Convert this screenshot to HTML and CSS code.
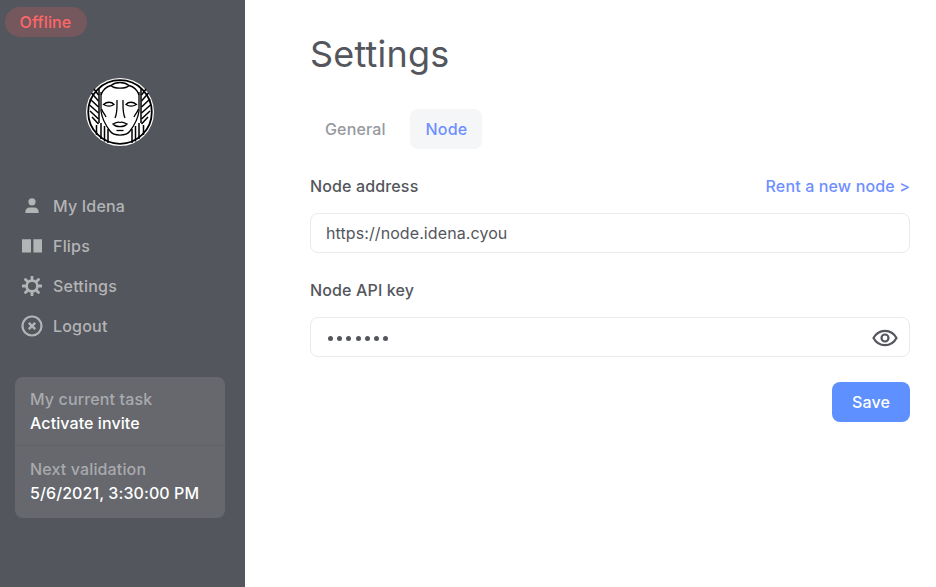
FILE: index.html
```html
<!DOCTYPE html>
<html lang="en">
<head>
<meta charset="utf-8">
<title>Settings</title>
<link rel="stylesheet" href="styles.css">
</head>
<body>
<div class="app">
  <aside class="sidebar">
    <div class="status">Offline</div>
    <div class="logo-row">
      <svg class="logo" viewBox="0 0 68 68" width="68" height="68">
        <circle cx="34" cy="34" r="34" fill="#fff"/>
        <circle cx="34" cy="34" r="31.800" fill="#fff" stroke="#000" stroke-width="1.800"/>
        <g fill="none" stroke="#000" stroke-width="1.300">
          <path d="M25 7.500 C28 11 40 11 43 7.500"/>
          <path d="M25 7.500 C30 3.500 38 3.500 43 7.500"/>
          <path d="M15 17 C17 11 21 8.500 25 7.500 M53 17 C51 11 47 8.500 43 7.500"/>
          <path d="M15 14 V33 C16 41 21 49 24 53 C28 58.500 40 58.500 44 53 C47 49 52 41 53 33 V14"/>
          <path d="M15.500 31 C17 35 19 36 20 39 M52.500 31 C51 35 49 36 48 39"/>
          <path d="M31 22 C31 28 31.500 35 29 40 M37 22 C37 28 36.500 35 39 40"/>
          <path d="M17.500 26.500 C21 23.500 25.500 23.500 28 26.500 C25 28.500 21 28.500 17.500 26.500 Z"/>
          <path d="M50.500 26.500 C47 23.500 42.500 23.500 40 26.500 C43 28.500 47 28.500 50.500 26.500 Z"/>
          <path d="M27 46 C30 44.500 32 43.500 34 44.500 C36 43.500 38 44.500 41 46 C38 49.500 30 49.500 27 46 Z"/>
          <path d="M30.500 52.500 H37.500"/>
          <path d="M13 11 V45 M55 11 V45" stroke-width="1.500"/>
          <path d="M12.500 17 L8 11 M12.500 23 L5.500 15 M12.500 29 L4 21 M12.500 35 L3.500 27 M12.500 41 L4 33 M12.500 46 L6 39" stroke-width="1.500"/>
          <path d="M55.500 17 L60 11 M55.500 23 L62.500 15 M55.500 29 L64 21 M55.500 35 L64.500 27 M55.500 41 L64 33 M55.500 46 L62 39" stroke-width="1.500"/>
          <path d="M15 45 V61 M18.500 48 V63.500 M22 51 V65 M53 45 V61 M49.500 48 V63.500 M46 51 V65" stroke-width="1.500"/>
          <path d="M10.500 47 V57 M57.500 47 V57" stroke-width="1.500"/>
        </g>
      </svg>
    </div>
    <nav class="nav">
      <a class="nav-item">
        <svg class="nav-icon" viewBox="0 0 20 20"><circle cx="10" cy="5.800" r="3.600" fill="currentColor"/><path d="M3.400 17v-1.600c0-2.300 1.900-4 4.200-4h4.800c2.300 0 4.200 1.700 4.200 4V17z" fill="currentColor"/></svg>
        <span>My Idena</span>
      </a>
      <a class="nav-item">
        <svg class="nav-icon" viewBox="0 0 20 20"><path d="M0 3.200h9v13.400H0zM11.400 3.200H20v13.400h-8.600z" fill="currentColor"/></svg>
        <span>Flips</span>
      </a>
      <a class="nav-item">
        <svg class="nav-icon" viewBox="0 0 20 20"><circle cx="10" cy="10" r="5.400" fill="none" stroke="currentColor" stroke-width="2.600"/><path d="M10 0.800v3M10 16.200v3M0.800 10h3M16.200 10h3M3.500 3.500l2.100 2.100M14.400 14.400l2.100 2.100M3.500 16.500l2.100-2.100M14.400 5.600l2.100-2.100" stroke="currentColor" stroke-width="2.800" fill="none" stroke-linecap="round"/></svg>
        <span>Settings</span>
      </a>
      <a class="nav-item">
        <svg class="nav-icon nav-icon-lg" viewBox="0 0 22 22"><circle cx="11" cy="11" r="9.500" fill="none" stroke="currentColor" stroke-width="2.200"/><path d="M7.800 7.800l6.400 6.400M14.200 7.800l-6.400 6.400" stroke="currentColor" stroke-width="2.400" fill="none"/></svg>
        <span>Logout</span>
      </a>
    </nav>
    <section class="card">
      <div class="card-block">
        <div class="card-label">My current task</div>
        <div class="card-value">Activate invite</div>
      </div>
      <div class="card-block card-block-last">
        <div class="card-label">Next validation</div>
        <div class="card-value">5/6/2021, 3:30:00 PM</div>
      </div>
    </section>
  </aside>
  <main class="main">
    <h1 class="title">Settings</h1>
    <div class="tabs">
      <a class="tab">General</a>
      <a class="tab tab-active">Node</a>
    </div>
    <div class="field-head">
      <label class="label">Node address</label>
      <a class="link">Rent a new node &gt;</a>
    </div>
    <div class="input"><span>https://node.idena.cyou</span></div>
    <label class="label label-key">Node API key</label>
    <div class="input input-pass">
      <span class="dots"><i></i><i></i><i></i><i></i><i></i><i></i><i></i></span>
      <svg class="eye" viewBox="0 0 26 20" width="26" height="20"><path d="M1.500 10C4 5.300 8 2.800 13 2.800S22 5.300 24.500 10C22 14.700 18 17.200 13 17.200S4 14.700 1.500 10z" fill="none" stroke="#53565c" stroke-width="2.200"/><circle cx="13" cy="10" r="3.500" fill="none" stroke="#53565c" stroke-width="2.200"/></svg>
    </div>
    <div class="actions"><button class="save">Save</button></div>
  </main>
</div>
</body>
</html>
```
FILE: styles.css
```css
* { box-sizing: border-box; }
html, body { margin: 0; height: 100%; }
body { font-family: Inter, "Liberation Sans", sans-serif; background: #fff; color: #53565c; overflow: hidden; letter-spacing: .14px; }
.app { display: flex; height: 587px; }
.sidebar { width: 245px; flex: none; background: #53565c; padding: 7px 20px 0 5px; }
.status { width: 82px; height: 30px; border-radius: 15px; background: rgba(255,102,102,.2); color: #ff6666; font-size: 16px; font-weight: 500; line-height: 30px; text-align: center; padding-right: 1px; }
.logo-row { margin: 41px 0 0 81px; }
.logo { display: block; }
.nav { margin: 40px 0 0 17px; }
.nav-item { display: flex; align-items: center; height: 40px; color: #b3b4b6; font-size: 16px; font-weight: 500; letter-spacing: .2px; }
.nav-icon { width: 20px; height: 20px; margin-right: 11px; flex: none; }
.nav-icon-lg { width: 22px; height: 22px; margin-left: -1px; margin-right: 10px; }
.card { margin: 31px 0 0 10px; width: 210px; border-radius: 8px; background: #66686d; }
.card-block { padding: 10px 15px 10px; height: 69px; border-bottom: 1px solid #606267; }
.card-block-last { border-bottom: 0; height: 72px; padding-top: 11px; }
.card-label { color: #a9aaad; font-size: 16px; font-weight: 500; line-height: 24px; }
.card-value { color: #fff; font-size: 16px; font-weight: 500; line-height: 24px; letter-spacing: .09px; }
.main { flex: 1; padding: 0 26px 0 65px; }
.title { margin: 0; padding-top: 32px; font-size: 36px; line-height: 44px; font-weight: 400; letter-spacing: .2px; color: #53565c; }
.tabs { display: flex; gap: 9px; margin: 33px 0 0; }
.tab { height: 40px; padding: 0 15px; border-radius: 8px; font-size: 16px; font-weight: 450; line-height: 40px; color: #96999e; }
.tab-active { background: #f5f6f7; color: #6f8fff; padding: 0 15px 0 16px; }
.field-head { display: flex; justify-content: space-between; margin-top: 25px; line-height: 24px; height: 24px; }
.label { display: block; font-size: 16px; font-weight: 450; line-height: 24px; color: #53565c; }
.link { font-size: 16px; font-weight: 450; color: #6f8fff; }
.input { display: flex; align-items: center; justify-content: space-between; height: 40px; margin-top: 15px; padding: 0 11px 0 15px; border: 1px solid #e8eaed; border-radius: 8px; font-size: 16px; color: #53565c; letter-spacing: .09px; }
.label-key { margin-top: 25px; }
.input-pass { margin-top: 15px; }
.dots { display: flex; gap: 4.200px; margin: 2px 0 0 2px; }
.dots i { width: 5px; height: 5px; border-radius: 50%; background: #53565c; }
.eye { display: block; margin-top: 1px; }
.actions { display: flex; justify-content: flex-end; margin-top: 25px; }
.save { width: 78px; height: 40px; border: 0; border-radius: 8px; background: #5f90ff; color: #fff; font: 500 16px Inter, "Liberation Sans", sans-serif; letter-spacing: .14px; }
```
